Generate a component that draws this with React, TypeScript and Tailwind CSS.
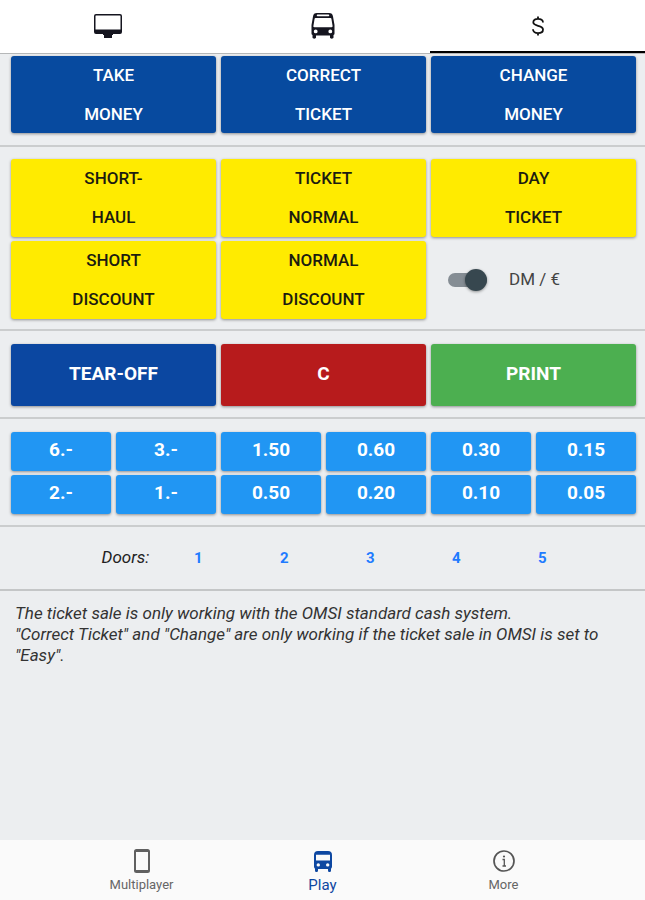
import React, { useState } from 'react';
import clsx from 'clsx';

interface PadButtonProps {
  lines: string[];
  className?: string;
}

const PadButton = ({ lines, className }: PadButtonProps) => (
  <button
    type="button"
    className={clsx('rounded-[3px] shadow-[0_1px_3px_rgba(0,0,0,0.4)] text-center', className)}
  >
    {lines.map((line) => (
      <span key={line} className="block">{line}</span>
    ))}
  </button>
);

const MonitorIcon = () => (
  <svg viewBox="0 0 30 26" className="w-[30px] h-[26px]" fill="#15151f">
    <path
      fillRule="evenodd"
      d="M3 1h24a2 2 0 0 1 2 2v16a2 2 0 0 1-2 2h-7v1h-1v3h-8v-3h-1v-1H3a2 2 0 0 1-2-2V3a2 2 0 0 1 2-2zm0 1.500a.5.5 0 0 0-.5.5v13.500h25V3a.5.5 0 0 0-.5-.5z"
    />
  </svg>
);

const BusFrontIcon = () => (
  <svg viewBox="0 0 24 26" className="w-6 h-[26px]" fill="#15151f">
    <path
      fillRule="evenodd"
      d="M6 0h12c2.500 0 3.700 1 4 3.500l1.500 8.500v8.500a1.500 1.500 0 0 1-1 1.500v2.500c0 1.500-3.500 1.500-3.500 0V22.500H5v2c0 1.500-3.500 1.500-3.500 0V22a1.500 1.500 0 0 1-1-1.500V12L2 3.500C2.300 1 3.500 0 6 0zM6.500 1.400c-1 0-1 1.900 0 1.900h11c1 0 1-1.900 0-1.900zM4.500 5c-.6 0-.8.3-.9.8L2.400 13c-.1.800.2 1.200 1 1.200h17.200c.8 0 1.100-.4 1-1.200l-1.200-7.200c-.1-.5-.3-.8-.9-.8zM4.700 16.500a1.900 1.900 0 1 0 0 3.800 1.900 1.900 0 0 0 0-3.800zm14.600 0a1.900 1.900 0 1 0 0 3.800 1.900 1.900 0 0 0 0-3.800z"
    />
  </svg>
);

const DollarIcon = () => (
  <svg viewBox="0 0 12 20" className="w-3 h-5" fill="none" stroke="#111" strokeWidth="1.800">
    <path d="M11 6.500C11 4 9 2.800 6 2.800S1.300 4.200 1.300 6.300C1.300 11 11 8.500 11 13.500c0 2.400-2 3.700-5 3.700s-5-1.500-5-3.900M6 .5v2.500M6 17v2.500" />
  </svg>
);

const PhoneIcon = () => (
  <svg viewBox="0 0 16 24" className="w-4 h-6" fill="#606060">
    <path
      fillRule="evenodd"
      d="M2.500 0h11A2.500 2.500 0 0 1 16 2.500v19a2.500 2.500 0 0 1-2.500 2.500h-11A2.500 2.500 0 0 1 0 21.500v-19A2.500 2.500 0 0 1 2.500 0zM2 3v18h12V3z"
    />
  </svg>
);

const PlayBusIcon = () => (
  <svg viewBox="0 0 18 21" className="w-[18px] h-[21px]" fill="#0d47a1">
    <path
      fillRule="evenodd"
      d="M4 0h10a4 4 0 0 1 4 4v11.500a3 3 0 0 1-1 2.200v1.800c0 2-3 2-3 0V18H4v1.500c0 2-3 2-3 0v-1.800a3 3 0 0 1-1-2.200V4a4 4 0 0 1 4-4zM2 3.800V9.500h14V3.800zM4.300 12.200a1.700 1.700 0 1 0 0 3.400 1.700 1.700 0 0 0 0-3.400zm9.400 0a1.700 1.700 0 1 0 0 3.400 1.700 1.700 0 0 0 0-3.400z"
    />
  </svg>
);

const InfoIcon = () => (
  <svg viewBox="0 0 22 22" className="w-[22px] h-[22px]" fill="none" stroke="#555" strokeWidth="1.700">
    <circle cx="11" cy="11" r="10" />
    <path d="M9.500 9.500h1.800V16M9.500 16h3.500" strokeWidth="1.300" />
    <circle cx="11" cy="6.500" r="1.100" fill="#555" stroke="none" />
  </svg>
);

const topTabs = [
  { id: 'monitor', label: 'Monitor', icon: <MonitorIcon /> },
  { id: 'bus', label: 'Bus', icon: <BusFrontIcon /> },
  { id: 'cash', label: 'Cash desk', icon: <DollarIcon /> },
];

const bottomTabs = [
  { label: 'Multiplayer', icon: <PhoneIcon />, active: false },
  { label: 'Play', icon: <PlayBusIcon />, active: true },
  { label: 'More', icon: <InfoIcon />, active: false },
];

const actions = [['TAKE', 'MONEY'], ['CORRECT', 'TICKET'], ['CHANGE', 'MONEY']];

const tickets = [
  ['SHORT-', 'HAUL'],
  ['TICKET', 'NORMAL'],
  ['DAY', 'TICKET'],
  ['SHORT', 'DISCOUNT'],
  ['NORMAL', 'DISCOUNT'],
];

const controls = [
  { label: 'TEAR-OFF', color: 'bg-[#0b47a1]' },
  { label: 'C', color: 'bg-[#b71b1c]' },
  { label: 'PRINT', color: 'bg-[#4caf50]' },
];

const coins = ['6.-', '3.-', '1.50', '0.60', '0.30', '0.15', '2.-', '1.-', '0.50', '0.20', '0.10', '0.05'];

const doors = ['1', '2', '3', '4', '5'];

const App = () => {
  const [tab, setTab] = useState('cash');
  const [euro, setEuro] = useState(true);

  return (
    <div className="min-h-screen flex flex-col bg-[#eceef0] font-[Roboto,sans-serif] text-[#222]">
      <header className="grid grid-cols-3 h-[54px] bg-white border-b border-[#b5b7b8]">
        {topTabs.map((t) => (
          <button
            key={t.id}
            type="button"
            aria-label={t.label}
            onClick={() => setTab(t.id)}
            className={clsx(
              'flex items-center justify-center border-b-2',
              tab === t.id ? 'border-black' : 'border-transparent'
            )}
          >
            {t.icon}
          </button>
        ))}
      </header>

      <main className="flex-1">
        <section className="grid grid-cols-3 gap-[5px] pl-[11px] pr-[9px] pt-[2px] pb-3 border-b-2 border-[#cbcdce]">
          {actions.map((lines) => (
            <PadButton
              key={lines[0]}
              lines={lines}
              className="h-[77px] bg-[#074a9f] text-white text-[17px] leading-[39px] font-medium"
            />
          ))}
        </section>

        <section className="grid grid-cols-3 gap-x-[5px] gap-y-1 pl-[11px] pr-[9px] pt-3 pb-[10px] border-b-2 border-[#cbcdce]">
          {tickets.map((lines) => (
            <PadButton
              key={lines.join(' ')}
              lines={lines}
              className="h-[78px] bg-[#ffeb00] text-[#1c1c10] text-[17px] leading-[39px] font-medium"
            />
          ))}
          <label className="relative flex items-center gap-[22px] pl-[17px] text-[17px] text-[#444] cursor-pointer">
            <input
              type="checkbox"
              role="switch"
              checked={euro}
              onChange={(e) => setEuro(e.target.checked)}
              className="peer sr-only"
            />
            <span className="flex items-center justify-start peer-checked:justify-end w-[39px] h-[14px] rounded-full bg-[#858d94]">
              <span className="w-[22px] h-[22px] shrink-0 rounded-full bg-[#37474f] shadow-[0_1px_3px_rgba(0,0,0,0.4)]"></span>
            </span>
            DM / €
          </label>
        </section>

        <section className="grid grid-cols-3 gap-[5px] pl-[11px] pr-[9px] pt-[13px] pb-[11px] border-b-2 border-[#cbcdce]">
          {controls.map((c) => (
            <PadButton
              key={c.label}
              lines={[c.label]}
              className={clsx('h-[62px] pb-[2px] text-white text-[19px] font-bold', c.color)}
            />
          ))}
        </section>

        <section className="grid grid-cols-6 gap-x-[5px] gap-y-1 pl-[11px] pr-[9px] pt-[13px] pb-[11px] border-b-2 border-[#cbcdce]">
          {coins.map((coin) => (
            <PadButton
              key={coin}
              lines={[coin]}
              className="h-[39px] pb-[2px] bg-[#2196f3] text-white text-[19px] font-bold"
            />
          ))}
        </section>

        <section className="flex items-center justify-center h-16 pl-[42px] border-b-2 border-[#c4c6c7]">
          <span className="italic text-[17px]">Doors:</span>
          <div className="flex pl-[6px]">
            {doors.map((door) => (
              <button key={door} type="button" className="w-[86px] text-[15px] font-bold text-[#1f7bff]">
                {door}
              </button>
            ))}
          </div>
        </section>

        <p className="px-[15px] pt-3 text-[17px] leading-[21px] italic text-[#333]">
          The ticket sale is only working with the OMSI standard cash system.
          <br />
          "Correct Ticket" and "Change" are only working if the ticket sale in OMSI is set to "Easy".
        </p>
      </main>

      <nav className="flex justify-center h-[60px] bg-[#fafafa]">
        {bottomTabs.map((t) => (
          <a
            key={t.label}
            href="#"
            className={clsx(
              'flex flex-col items-center w-[181px] pt-[9px]',
              t.active ? 'text-[15px] text-[#0d47a1]' : 'text-[13px] text-[#666]'
            )}
          >
            <span className="flex items-center h-6">{t.icon}</span>
            <span className="leading-6">{t.label}</span>
          </a>
        ))}
      </nav>
    </div>
  );
};

export default App;
